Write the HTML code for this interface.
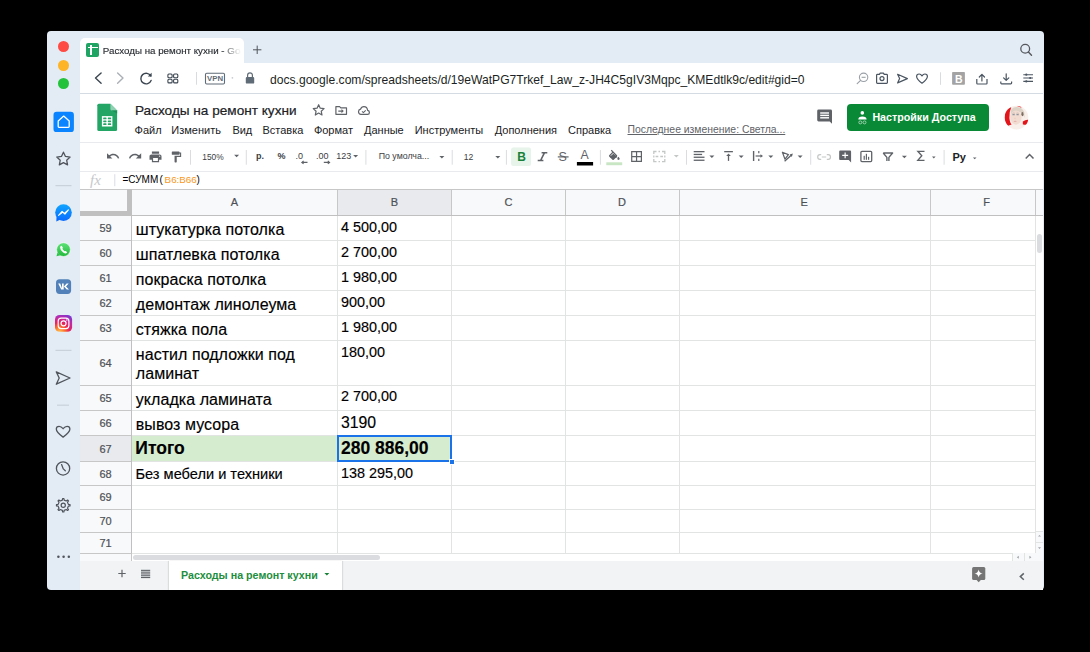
<!DOCTYPE html>
<html><head><meta charset="utf-8">
<style>
*{box-sizing:border-box;margin:0;padding:0}
html,body{width:1090px;height:652px;overflow:hidden;background:#000;font-family:"Liberation Sans",sans-serif}
.a{position:absolute}
.t{position:absolute;white-space:nowrap;line-height:1}
#win{position:absolute;left:46.5px;top:31.3px;width:997px;height:558.5px;background:#e3ebf4;border-radius:4px 4px 4px 4px;overflow:hidden}
.dot{position:absolute;width:11px;height:11px;border-radius:50%}
.hl{position:absolute;height:1px;background:#e2e3e3}
.vl{position:absolute;width:1px;background:#e2e3e3}
.rn{position:absolute;left:80px;width:51px;text-align:center;font-size:11px;color:#4d5156;line-height:1;-webkit-text-stroke:0.2px #4d5156}
.ct{position:absolute;white-space:nowrap;line-height:1;color:#000;font-size:16px}
.nm{position:absolute;white-space:nowrap;line-height:1;color:#000;font-size:14.5px}
.sep{position:absolute;width:1px;height:19px;top:147px;background:#dadce0}
.mn{position:absolute;top:124.6px;font-size:11px;color:#202124;white-space:nowrap;line-height:1}
svg{position:absolute;overflow:visible}
</style></head><body>
<div id="win"></div>

<!-- traffic lights -->
<div class="dot" style="left:58px;top:41px;background:#fe4b44"></div>
<div class="dot" style="left:58px;top:59.7px;background:#fdb426"></div>
<div class="dot" style="left:58px;top:78px;background:#23c23b"></div>

<!-- tab -->
<div class="a" style="left:80px;top:38px;width:164px;height:26px;background:#fff;border-radius:5px 5px 0 0"></div>
<div class="a" style="left:86px;top:43.4px;width:13.4px;height:13.4px;background:#1fa463;border-radius:2px"></div>
<div class="a" style="left:88px;top:46.8px;width:9.6px;height:1.5px;background:#fff"></div>
<div class="a" style="left:90.4px;top:45px;width:1.5px;height:10px;background:#fff"></div>
<div class="t" style="left:102.8px;top:46px;font-size:9.75px;color:#2a2e33;-webkit-text-stroke:0.15px #2a2e33;width:138px;overflow:hidden;-webkit-mask-image:linear-gradient(90deg,#000 85%,transparent)">Расходы на ремонт кухни - Google Таблицы</div>

<!-- address bar -->
<div class="a" style="left:80px;top:63px;width:963px;height:30px;background:#fff"></div>
<div class="a" style="left:80px;top:93px;width:963px;height:1px;background:#d5dbe2"></div>
<div class="t" style="left:270px;top:73.5px;font-size:12.1px;color:#1c1f23">docs.google.com/spreadsheets/d/19eWatPG7Trkef_Law_z-JH4C5gIV3Mqpc_KMEdtlk9c/edit#gid=0</div>

<!-- page -->
<div class="a" style="left:80px;top:94px;width:963px;height:496px;background:#fff"></div>

<!-- sheets header -->
<div class="t" style="left:135px;top:103.8px;font-size:13.6px;color:#202124;-webkit-text-stroke:0.2px #202124">Расходы на ремонт кухни</div>
<div class="mn" style="left:134.6px">Файл</div>
<div class="mn" style="left:171.3px">Изменить</div>
<div class="mn" style="left:232.4px">Вид</div>
<div class="mn" style="left:262.5px">Вставка</div>
<div class="mn" style="left:313.9px">Формат</div>
<div class="mn" style="left:364px">Данные</div>
<div class="mn" style="left:414.7px">Инструменты</div>
<div class="mn" style="left:494.7px">Дополнения</div>
<div class="mn" style="left:568px">Справка</div>
<div class="mn" style="left:627.5px;font-size:10.4px;color:#5f6368;text-decoration:underline;top:125px">Последнее изменение: Светла...</div>

<!-- share button -->
<div class="a" style="left:847px;top:104.4px;width:142px;height:26.6px;background:#098935;border-radius:4px"></div>
<div class="t" style="left:872.4px;top:112px;font-size:10.7px;font-weight:700;color:#fff">Настройки Доступа</div>

<!-- toolbar lines -->
<div class="a" style="left:80px;top:142px;width:963px;height:1px;background:#e8eaed"></div>
<div class="a" style="left:80px;top:171px;width:963px;height:1px;background:#e8eaed"></div>

<!-- formula bar -->
<div class="t" style="left:122.5px;top:175px;font-size:10px;color:#000">=СУММ</div><div class="t" style="left:159.6px;top:175px;font-size:10px;color:#000">(</div><div class="t" style="left:164.6px;top:175px;font-size:9.8px;color:#f7981d;letter-spacing:0px">B6:B66</div><div class="t" style="left:196.4px;top:175px;font-size:10px;color:#000">)</div>

<!-- GRID -->
<div id="grid">
<div class="a" style="left:80px;top:189px;width:963px;height:26px;background:#f8f9fa"></div>
<div class="a" style="left:337px;top:189px;width:114px;height:26px;background:#e8eaed"></div>
<div class="a" style="left:80px;top:215px;width:51px;height:338px;background:#f8f9fa"></div>
<div class="a" style="left:80px;top:435px;width:51px;height:26px;background:#e8eaed"></div>
<div class="a" style="left:132px;top:435px;width:319px;height:26px;background:#d6eccf"></div>
<div class="a" style="left:132px;top:240px;width:903px;height:1px;background:#e2e3e3"></div>
<div class="a" style="left:80px;top:240px;width:51px;height:1px;background:#c7c7c7"></div>
<div class="a" style="left:132px;top:265px;width:903px;height:1px;background:#e2e3e3"></div>
<div class="a" style="left:80px;top:265px;width:51px;height:1px;background:#c7c7c7"></div>
<div class="a" style="left:132px;top:290px;width:903px;height:1px;background:#e2e3e3"></div>
<div class="a" style="left:80px;top:290px;width:51px;height:1px;background:#c7c7c7"></div>
<div class="a" style="left:132px;top:315px;width:903px;height:1px;background:#e2e3e3"></div>
<div class="a" style="left:80px;top:315px;width:51px;height:1px;background:#c7c7c7"></div>
<div class="a" style="left:132px;top:340px;width:903px;height:1px;background:#e2e3e3"></div>
<div class="a" style="left:80px;top:340px;width:51px;height:1px;background:#c7c7c7"></div>
<div class="a" style="left:132px;top:385px;width:903px;height:1px;background:#e2e3e3"></div>
<div class="a" style="left:80px;top:385px;width:51px;height:1px;background:#c7c7c7"></div>
<div class="a" style="left:132px;top:410px;width:903px;height:1px;background:#e2e3e3"></div>
<div class="a" style="left:80px;top:410px;width:51px;height:1px;background:#c7c7c7"></div>
<div class="a" style="left:132px;top:435px;width:903px;height:1px;background:#e2e3e3"></div>
<div class="a" style="left:80px;top:435px;width:51px;height:1px;background:#c7c7c7"></div>
<div class="a" style="left:132px;top:461px;width:903px;height:1px;background:#e2e3e3"></div>
<div class="a" style="left:80px;top:461px;width:51px;height:1px;background:#c7c7c7"></div>
<div class="a" style="left:132px;top:485px;width:903px;height:1px;background:#e2e3e3"></div>
<div class="a" style="left:80px;top:485px;width:51px;height:1px;background:#c7c7c7"></div>
<div class="a" style="left:132px;top:509px;width:903px;height:1px;background:#e2e3e3"></div>
<div class="a" style="left:80px;top:509px;width:51px;height:1px;background:#c7c7c7"></div>
<div class="a" style="left:132px;top:532px;width:903px;height:1px;background:#e2e3e3"></div>
<div class="a" style="left:80px;top:532px;width:51px;height:1px;background:#c7c7c7"></div>
<div class="a" style="left:132px;top:553px;width:903px;height:1px;background:#e2e3e3"></div>
<div class="a" style="left:80px;top:553px;width:51px;height:1px;background:#c7c7c7"></div>
<div class="a" style="left:337px;top:215px;width:1px;height:338px;background:#e2e3e3"></div>
<div class="a" style="left:337px;top:189px;width:1px;height:26px;background:#c7c7c7"></div>
<div class="a" style="left:451px;top:215px;width:1px;height:338px;background:#e2e3e3"></div>
<div class="a" style="left:451px;top:189px;width:1px;height:26px;background:#c7c7c7"></div>
<div class="a" style="left:565px;top:215px;width:1px;height:338px;background:#e2e3e3"></div>
<div class="a" style="left:565px;top:189px;width:1px;height:26px;background:#c7c7c7"></div>
<div class="a" style="left:679px;top:215px;width:1px;height:338px;background:#e2e3e3"></div>
<div class="a" style="left:679px;top:189px;width:1px;height:26px;background:#c7c7c7"></div>
<div class="a" style="left:930px;top:215px;width:1px;height:338px;background:#e2e3e3"></div>
<div class="a" style="left:930px;top:189px;width:1px;height:26px;background:#c7c7c7"></div>
<div class="a" style="left:1035px;top:215px;width:1px;height:338px;background:#e2e3e3"></div>
<div class="a" style="left:1035px;top:189px;width:1px;height:26px;background:#c7c7c7"></div>
<div class="a" style="left:80px;top:189px;width:963px;height:1px;background:#c7c7c7"></div>
<div class="a" style="left:80px;top:214.5px;width:963px;height:1px;background:#c0c0c0"></div>
<div class="a" style="left:131px;top:189px;width:1px;height:364px;background:#c0c0c0"></div>
<div class="a" style="left:127px;top:189px;width:4.5px;height:26px;background:#c0c0c0"></div>
<div class="a" style="left:80px;top:211px;width:51px;height:4px;background:#c0c0c0"></div>
<div class="t" style="left:214.4px;width:40px;text-align:center;top:197.0px;font-size:11px;color:#4d5156;-webkit-text-stroke:0.2px #4d5156">A</div>
<div class="t" style="left:374.3px;width:40px;text-align:center;top:197.0px;font-size:11px;color:#4d5156;-webkit-text-stroke:0.2px #4d5156">B</div>
<div class="t" style="left:488.4px;width:40px;text-align:center;top:197.0px;font-size:11px;color:#4d5156;-webkit-text-stroke:0.2px #4d5156">C</div>
<div class="t" style="left:602.0px;width:40px;text-align:center;top:197.0px;font-size:11px;color:#4d5156;-webkit-text-stroke:0.2px #4d5156">D</div>
<div class="t" style="left:784.2px;width:40px;text-align:center;top:197.0px;font-size:11px;color:#4d5156;-webkit-text-stroke:0.2px #4d5156">E</div>
<div class="t" style="left:966.6px;width:40px;text-align:center;top:197.0px;font-size:11px;color:#4d5156;-webkit-text-stroke:0.2px #4d5156">F</div>
<div class="rn" style="top:223.1px">59</div>
<div class="rn" style="top:248.3px">60</div>
<div class="rn" style="top:273.3px">61</div>
<div class="rn" style="top:298.2px">62</div>
<div class="rn" style="top:323.2px">63</div>
<div class="rn" style="top:358.0px">64</div>
<div class="rn" style="top:392.7px">65</div>
<div class="rn" style="top:417.7px">66</div>
<div class="rn" style="top:443.5px">67</div>
<div class="rn" style="top:468.7px">68</div>
<div class="rn" style="top:492.4px">69</div>
<div class="rn" style="top:515.8px">70</div>
<div class="rn" style="top:537.9px">71</div>
<div class="t" style="left:135.8px;top:222.2px;font-size:16px;font-weight:400;color:#000;-webkit-text-stroke:0.15px #000;letter-spacing:0.05px">штукатурка потолка</div>
<div class="t" style="left:135.8px;top:247.3px;font-size:16px;font-weight:400;color:#000;-webkit-text-stroke:0.15px #000;letter-spacing:0.05px">шпатлевка потолка</div>
<div class="t" style="left:135.8px;top:272.2px;font-size:16px;font-weight:400;color:#000;-webkit-text-stroke:0.15px #000;letter-spacing:0.05px">покраска потолка</div>
<div class="t" style="left:135.8px;top:297.1px;font-size:16px;font-weight:400;color:#000;-webkit-text-stroke:0.15px #000;letter-spacing:0.05px">демонтаж линолеума</div>
<div class="t" style="left:135.8px;top:322.1px;font-size:16px;font-weight:400;color:#000;-webkit-text-stroke:0.15px #000;letter-spacing:0.05px">стяжка пола</div>
<div class="t" style="left:135.8px;top:391.5px;font-size:16px;font-weight:400;color:#000;-webkit-text-stroke:0.15px #000;letter-spacing:0.05px">укладка ламината</div>
<div class="t" style="left:135.8px;top:416.7px;font-size:16px;font-weight:400;color:#000;-webkit-text-stroke:0.15px #000;letter-spacing:0.05px">вывоз мусора</div>
<div class="t" style="left:135.8px;top:347.0px;font-size:16px;font-weight:400;color:#000;-webkit-text-stroke:0.15px #000;letter-spacing:0.05px">настил подложки под</div>
<div class="t" style="left:135.8px;top:366.3px;font-size:16px;font-weight:400;color:#000;-webkit-text-stroke:0.15px #000;letter-spacing:0.05px">ламинат</div>
<div class="t" style="left:135.3px;top:440.0px;font-size:17.5px;font-weight:700;color:#000;-webkit-text-stroke:0.15px #000">Итого</div>
<div class="t" style="left:135.5px;top:466.9px;font-size:14.6px;font-weight:400;color:#000;-webkit-text-stroke:0.15px #000">Без мебели и техники</div>
<div class="t" style="left:341.0px;top:219.6px;font-size:14.4px;font-weight:400;color:#000;-webkit-text-stroke:0.15px #000">4 500,00</div>
<div class="t" style="left:341.0px;top:244.9px;font-size:14.4px;font-weight:400;color:#000;-webkit-text-stroke:0.15px #000">2 700,00</div>
<div class="t" style="left:341.0px;top:270.0px;font-size:14.4px;font-weight:400;color:#000;-webkit-text-stroke:0.15px #000">1 980,00</div>
<div class="t" style="left:341.0px;top:294.9px;font-size:14.4px;font-weight:400;color:#000;-webkit-text-stroke:0.15px #000">900,00</div>
<div class="t" style="left:341.0px;top:319.8px;font-size:14.4px;font-weight:400;color:#000;-webkit-text-stroke:0.15px #000">1 980,00</div>
<div class="t" style="left:341.0px;top:344.8px;font-size:14.4px;font-weight:400;color:#000;-webkit-text-stroke:0.15px #000">180,00</div>
<div class="t" style="left:341.0px;top:389.4px;font-size:14.4px;font-weight:400;color:#000;-webkit-text-stroke:0.15px #000">2 700,00</div>
<div class="t" style="left:341.0px;top:465.9px;font-size:14.4px;font-weight:400;color:#000;-webkit-text-stroke:0.15px #000">138 295,00</div>
<div class="t" style="left:341.0px;top:415.2px;font-size:15.8px;font-weight:400;color:#000;-webkit-text-stroke:0.15px #000">3190</div>
<div class="t" style="left:341.0px;top:439.8px;font-size:17.5px;font-weight:700;color:#000;-webkit-text-stroke:0.15px #000">280 886,00</div>
<div class="a" style="left:337px;top:434.5px;width:115px;height:27px;border:2px solid #1a73e8"></div>
<div class="a" style="left:448.5px;top:458.5px;width:6px;height:6px;background:#1a73e8;border:1px solid #fff"></div>
<div class="a" style="left:1036px;top:215.5px;width:7px;height:337.5px;background:#fff"></div>
<div class="a" style="left:1036.9px;top:233.8px;width:4.8px;height:19px;background:#dadce0;border-radius:3px"></div>
<div class="a" style="left:1036px;top:530.5px;width:7px;height:22.5px;background:#f8f9fa;border-top:1px solid #e2e3e3"></div>
<div class="a" style="left:1036px;top:541.5px;width:7px;height:1px;background:#e2e3e3"></div>
<div class="a" style="left:80px;top:554px;width:963px;height:7px;background:#fff"></div>
<div class="a" style="left:80px;top:554px;width:51px;height:7px;background:#f8f9fa"></div>
<div class="a" style="left:131px;top:553px;width:1px;height:8px;background:#c7c7c7"></div>
<div class="a" style="left:133.2px;top:554.5px;width:247.3px;height:5.2px;background:#dadce0;border-radius:3px"></div>
<div class="a" style="left:1012px;top:553px;width:31px;height:8px;background:#f8f9fa;border-left:1px solid #e2e3e3"></div>
<div class="a" style="left:1024px;top:553px;width:1px;height:8px;background:#e2e3e3"></div>
</div><!--/grid-->

<!-- bottom bar -->
<div class="a" style="left:80px;top:561px;width:963px;height:29px;background:#f1f3f4;border-radius:0 0 4px 0"></div>
<div class="a" style="left:169px;top:561px;width:173px;height:29px;background:#fff;box-shadow:-1px 0 1px rgba(60,64,67,.12),1px 0 1px rgba(60,64,67,.12)"></div>
<div class="t" style="left:181px;top:569.7px;font-size:10.7px;font-weight:700;color:#1e8e3e">Расходы на ремонт кухни</div>
<div class="t" style="left:207px;top:75.2px;font-size:7.8px;font-weight:700;color:#5f6b77">VPN</div>
<!--tb--><div class="t" style="left:202.3px;top:152.5px;font-size:8.4px;color:#3c4043">150%</div>
<div class="t" style="left:256.1px;top:152px;font-size:9px;font-weight:700;color:#3c4043">р.</div>
<div class="t" style="left:277.4px;top:152px;font-size:9px;font-weight:700;color:#3c4043">%</div>
<div class="t" style="left:295.6px;top:151.6px;font-size:9px;color:#3c4043">.0</div>
<div class="t" style="left:315.9px;top:151.6px;font-size:9px;color:#3c4043">.00</div>
<div class="t" style="left:336.2px;top:151.6px;font-size:9px;color:#3c4043">123</div>
<div class="t" style="left:378.7px;top:152.4px;font-size:8.8px;color:#3c4043">По умолча...</div>
<div class="t" style="left:463.8px;top:152.6px;font-size:8.6px;color:#3c4043">12</div>
<div class="t" style="left:558.6px;top:150.7px;font-size:12.5px;color:#5f6368">S</div>
<div class="t" style="left:580.6px;top:148.6px;font-size:12.3px;color:#5f6368">A</div>
<div class="t" style="left:952.4px;top:152.2px;font-size:11px;font-weight:700;color:#202124">Ру</div>
<div class="t" style="left:90px;top:173px;font-size:15px;font-style:italic;font-family:'Liberation Serif',serif;color:#c5c8cc">fx</div>
<!--/tb-->
<!--svg--><svg width="1090" height="652" viewBox="0 0 1090 652" style="left:0;top:0">
<defs>
<linearGradient id="msg" x1="0" y1="0" x2="0" y2="1"><stop offset="0" stop-color="#0fa5ff"/><stop offset="1" stop-color="#0a6cff"/></linearGradient>
<radialGradient id="ig" cx="0.25" cy="1.05" r="1.2"><stop offset="0" stop-color="#fdd05a"/><stop offset="0.25" stop-color="#fd7a2a"/><stop offset="0.5" stop-color="#e8235a"/><stop offset="0.75" stop-color="#c02aa8"/><stop offset="1" stop-color="#6a3ad8"/></radialGradient>
<linearGradient id="wa" x1="0" y1="0" x2="0" y2="1"><stop offset="0" stop-color="#5fe37a"/><stop offset="1" stop-color="#20b83a"/></linearGradient>
</defs>
<!-- opera sidebar -->
<rect x="53.5" y="111.8" width="20.4" height="20.3" rx="3.2" fill="#0a84ff"/>
<path d="M58.2,121 L63.7,116.1 L69.2,121 L69.2,126.6 Q69.2,127.4 68.4,127.4 L59,127.4 Q58.2,127.4 58.2,126.6 Z" fill="none" stroke="#fff" stroke-width="1.3" stroke-linejoin="round"/>
<path d="M63.45,152.20 L65.45,156.45 L70.11,157.04 L66.68,160.25 L67.56,164.86 L63.45,162.60 L59.34,164.86 L60.22,160.25 L56.79,157.04 L61.45,156.45 Z" fill="none" stroke="#50555c" stroke-width="1.3" stroke-linejoin="round"/>
<rect x="55.5" y="185" width="16" height="1.2" fill="#c9d1db"/>
<circle cx="63.5" cy="212.6" r="8.3" fill="url(#msg)"/>
<path d="M56.5,217 L56.3,221.5 L60.5,219.5 Z" fill="#0a6cff"/>
<path d="M58.6,215.4 L62.1,211.3 L64.3,213.3 L68.4,209.8 L64.9,214.1 L62.7,212.1 Z" fill="#fff" stroke="#fff" stroke-width="1.1" stroke-linejoin="round"/>
<circle cx="63.5" cy="249.6" r="6.9" fill="url(#wa)" stroke="#fff" stroke-width="0.6"/>
<path d="M57.5,252.5 L56.5,256.3 L60.5,255.3 Z" fill="#2bc447"/>
<path d="M60.6,246.3 Q61.2,245.5 61.9,246 L62.8,247.6 Q62.9,248.2 62.4,248.6 Q62.8,250.3 64.6,251.3 Q65.1,250.8 65.6,251 L67,251.9 Q67.4,252.5 66.7,253.1 Q65.6,254 63.2,252.6 Q60.2,250.6 60.1,247.6 Q60.1,246.8 60.6,246.3 Z" fill="#fff"/>
<rect x="56" y="279.2" width="15.1" height="14.7" rx="3.6" fill="#5181b8"/>
<path d="M58.2,283.6 L60.2,283.6 L62,288.2 L62,283.6 L63.7,283.6 L63.7,289.6 L61.2,289.6 Z M63.9,286.5 L66.6,283.6 L68.7,283.6 L66,286.5 L69,289.6 L66.8,289.6 Z" fill="#fff"/>
<rect x="55" y="314.9" width="17.1" height="16.9" rx="4.6" fill="url(#ig)"/>
<rect x="58.2" y="318.1" width="10.7" height="10.5" rx="3" fill="none" stroke="#fff" stroke-width="1.2"/>
<circle cx="63.55" cy="323.35" r="2.5" fill="none" stroke="#fff" stroke-width="1.2"/>
<circle cx="66.9" cy="320.1" r="0.75" fill="#fff"/>
<rect x="55.5" y="349.8" width="16" height="1.2" fill="#c9d1db"/>
<path d="M56.3,371.9 L70,378 L56.3,384.2 L59.2,378 Z" fill="none" stroke="#50555c" stroke-width="1.3" stroke-linejoin="round"/>
<rect x="57" y="404.6" width="12" height="1.2" fill="#c9d1db"/>
<path d="M63.1,437.1 C59,434.2 56.3,431.6 56.3,429 C56.3,427.2 57.6,426.3 59.1,426.3 C60.7,426.3 62,427.3 63.1,428.7 C64.2,427.3 65.5,426.3 67.1,426.3 C68.6,426.3 69.9,427.2 69.9,429 C69.9,431.6 67.2,434.2 63.1,437.1 Z" fill="none" stroke="#50555c" stroke-width="1.3" stroke-linejoin="round"/>
<circle cx="63.05" cy="468.45" r="6.65" fill="none" stroke="#50555c" stroke-width="1.3"/>
<path d="M61.6,464.6 L63.3,468.9 L65.3,470.8" fill="none" stroke="#50555c" stroke-width="1.3" stroke-linecap="round" stroke-linejoin="round"/>
<path d="M68.37,504.36 L70.02,504.61 L70.02,505.89 L68.37,506.14 L67.50,508.24 L68.49,509.58 L67.58,510.49 L66.24,509.50 L64.14,510.37 L63.89,512.02 L62.61,512.02 L62.36,510.37 L60.26,509.50 L58.92,510.49 L58.01,509.58 L59.00,508.24 L58.13,506.14 L56.48,505.89 L56.48,504.61 L58.13,504.36 L59.00,502.26 L58.01,500.92 L58.92,500.01 L60.26,501.00 L62.36,500.13 L62.61,498.48 L63.89,498.48 L64.14,500.13 L66.24,501.00 L67.58,500.01 L68.49,500.92 L67.50,502.26 Z" fill="none" stroke="#50555c" stroke-width="1.2" stroke-linejoin="round"/>
<circle cx="63.25" cy="505.25" r="2.1" fill="none" stroke="#50555c" stroke-width="1.2"/>
<circle cx="58.4" cy="556.8" r="1.25" fill="#50555c"/><circle cx="63.6" cy="556.8" r="1.25" fill="#50555c"/><circle cx="68.8" cy="556.8" r="1.25" fill="#50555c"/>

<!-- tab bar -->
<path d="M253,49.8 H261.4 M257.2,45.6 V54" stroke="#50555c" stroke-width="1"/>
<circle cx="1025.2" cy="48.8" r="4.4" fill="none" stroke="#55595e" stroke-width="1.3"/>
<path d="M1028.4,52 L1031.5,55.2" stroke="#55595e" stroke-width="1.4" stroke-linecap="round"/>

<!-- nav -->
<path d="M101.1,72.9 L95.5,78.1 L101.1,83.3" fill="none" stroke="#3b4550" stroke-width="1.4" stroke-linecap="round" stroke-linejoin="round"/>
<path d="M117.6,72.9 L123,78.1 L117.6,83.3" fill="none" stroke="#aab0b6" stroke-width="1.4" stroke-linecap="round" stroke-linejoin="round"/>
<path d="M150.8,76 A5.3,5.3 0 1 0 151.1,80.5" fill="none" stroke="#3b4550" stroke-width="1.4" stroke-linecap="round"/>
<path d="M147.8,76.6 L151.6,76.6 L151.6,72.8 Z" fill="#3b4550"/>
<rect x="167.9" y="74" width="4.2" height="3.7" rx="1" fill="none" stroke="#3b4550" stroke-width="1.1"/>
<rect x="173.6" y="74" width="4.2" height="3.7" rx="1" fill="none" stroke="#3b4550" stroke-width="1.1"/>
<rect x="167.9" y="79.2" width="4.2" height="3.7" rx="1" fill="none" stroke="#3b4550" stroke-width="1.1"/>
<rect x="173.6" y="79.2" width="4.2" height="3.7" rx="1" fill="none" stroke="#3b4550" stroke-width="1.1"/>
<rect x="196" y="72" width="1" height="12.7" fill="#d8dce0"/>
<rect x="205.5" y="73.3" width="19" height="10.7" rx="1.2" fill="none" stroke="#5f6b77" stroke-width="1.1"/>
<circle cx="232.4" cy="77.8" r="0.9" fill="#c8ccd0"/>
<path d="M247.6,77 V75.2 A2.4,2.4 0 0 1 252.4,75.2 V77" fill="none" stroke="#5f6b77" stroke-width="1.2"/>
<rect x="245.8" y="76.9" width="8.4" height="6.7" rx="1.2" fill="#5f6b77"/>

<!-- address right -->
<circle cx="863.6" cy="77.3" r="4.2" fill="none" stroke="#9aa0a6" stroke-width="1.1"/>
<path d="M861.6,77.3 H865.6" stroke="#9aa0a6" stroke-width="1.1"/>
<path d="M860.6,80.4 L857.2,83.6" stroke="#9aa0a6" stroke-width="1.2" stroke-linecap="round"/>
<path d="M876.6,75.2 Q876.6,74.4 877.4,74.4 L879.4,74.4 L880.2,73.1 L883.4,73.1 L884.2,74.4 L886.6,74.4 Q887.4,74.4 887.4,75.2 L887.4,82.6 Q887.4,83.3 886.6,83.3 L877.4,83.3 Q876.6,83.3 876.6,82.6 Z" fill="none" stroke="#4a5561" stroke-width="1.2" stroke-linejoin="round"/>
<circle cx="882" cy="78.6" r="2" fill="none" stroke="#4a5561" stroke-width="1.2"/>
<path d="M897.6,74.3 L907.4,78.6 L897.6,82.9 L899.6,78.6 Z" fill="none" stroke="#4a5561" stroke-width="1.2" stroke-linejoin="round"/>
<path d="M922,83.2 C918.8,80.9 916.6,78.9 916.6,76.5 C916.6,74.9 917.8,74 919.1,74 C920.4,74 921.3,74.8 922,75.9 C922.7,74.8 923.6,74 924.9,74 C926.2,74 927.4,74.9 927.4,76.5 C927.4,78.9 925.2,80.9 922,83.2 Z" fill="none" stroke="#4a5561" stroke-width="1.2" stroke-linejoin="round"/>
<rect x="940" y="72.3" width="1" height="12.5" fill="#d8dce0"/>
<rect x="952.1" y="72" width="12.8" height="12.8" rx="0.8" fill="#a3a3a3"/>
<text x="955" y="82.6" font-family="Liberation Sans" font-size="10.5" font-weight="700" fill="#fff">B</text>
<path d="M976.8,79 V83.3 Q976.8,84 977.5,84 H986.3 Q987,84 987,83.3 V79" fill="none" stroke="#4a5561" stroke-width="1.2" stroke-linejoin="round"/>
<path d="M981.9,81 V74.5 M979.3,77 L981.9,74.3 L984.5,77" fill="none" stroke="#4a5561" stroke-width="1.2" stroke-linecap="round" stroke-linejoin="round"/>
<path d="M1000.8,81.4 V83 Q1000.8,83.8 1001.6,83.8 H1010.8 Q1011.6,83.8 1011.6,83 V81.4" fill="none" stroke="#4a5561" stroke-width="1.2" stroke-linejoin="round"/>
<path d="M1006.2,73.8 V80.2 M1003.6,77.8 L1006.2,80.4 L1008.8,77.8" fill="none" stroke="#4a5561" stroke-width="1.2" stroke-linecap="round" stroke-linejoin="round"/>
<path d="M1023.3,74.7 H1033 M1023.3,78 H1033 M1023.3,81.4 H1033" stroke="#4a5561" stroke-width="1.1"/>
<circle cx="1026.3" cy="74.7" r="1.1" fill="#4a5561"/><circle cx="1030.2" cy="78" r="1.1" fill="#4a5561"/><circle cx="1026.3" cy="81.4" r="1.1" fill="#4a5561"/>

<!-- sheets header -->
<path d="M98.8,103.8 H110.4 L117.1,110.5 V129.4 Q117.1,130.9 115.6,130.9 H98.8 Q97.3,130.9 97.3,129.4 V105.3 Q97.3,103.8 98.8,103.8 Z" fill="#23a566"/>
<path d="M110.4,103.8 L117.1,110.5 H112 Q110.4,110.5 110.4,108.9 Z" fill="#8ed1b1"/>
<path d="M111.6,110.5 L117.1,110.5 L117.1,113.5 Z" fill="#1b9157"/>
<rect x="101.9" y="116.1" width="10.5" height="10.4" fill="#fff"/>
<rect x="103.2" y="117.5" width="3.3" height="1.8" rx="0.6" fill="#23a566"/><rect x="107.8" y="117.5" width="3.3" height="1.8" rx="0.6" fill="#23a566"/>
<rect x="103.2" y="120.4" width="3.3" height="1.8" rx="0.6" fill="#23a566"/><rect x="107.8" y="120.4" width="3.3" height="1.8" rx="0.6" fill="#23a566"/>
<rect x="103.2" y="123.3" width="3.3" height="1.8" rx="0.6" fill="#23a566"/><rect x="107.8" y="123.3" width="3.3" height="1.8" rx="0.6" fill="#23a566"/>
<path d="M318.65,104.70 L320.24,108.22 L324.07,108.64 L321.22,111.23 L322.00,115.01 L318.65,113.10 L315.30,115.01 L316.08,111.23 L313.23,108.64 L317.06,108.22 Z" fill="none" stroke="#5f6368" stroke-width="1.2" stroke-linejoin="round"/>
<path d="M335.9,106.6 H339.6 L340.8,107.8 H346.5 V114.3 H335.9 Z" fill="none" stroke="#5f6368" stroke-width="1.2" stroke-linejoin="round"/>
<path d="M338.3,110.5 H341.5 V109 L343.8,111.1 L341.5,113.2 V111.7 H338.3 Z" fill="#5f6368"/>
<path d="M360.9,114.3 H367.6 Q369.4,114.3 369.4,112.4 Q369.4,110.6 367.6,110.4 Q367.2,106.7 363.9,106.7 Q361.4,106.7 360.5,109.2 Q358.5,109.6 358.5,111.8 Q358.6,114.3 360.9,114.3 Z" fill="none" stroke="#5f6368" stroke-width="1.2" stroke-linejoin="round"/>
<path d="M362,111.3 L363.4,112.6 L365.7,110.3" fill="none" stroke="#5f6368" stroke-width="1.1"/>
<path d="M818.6,109.6 H830.6 Q832,109.6 832,111 V123.7 L829.7,121.5 H818.6 Q817.2,121.5 817.2,120.1 V111 Q817.2,109.6 818.6,109.6 Z" fill="#5f6368"/>
<rect x="820.2" y="112.3" width="8.8" height="1.4" fill="#fff"/><rect x="820.2" y="114.7" width="8.8" height="1.4" fill="#fff"/><rect x="820.2" y="117.1" width="8.8" height="1.4" fill="#fff"/>
<circle cx="862.3" cy="112.9" r="1.8" fill="#fff"/>
<path d="M858.3,119.6 Q858.3,116.6 862.4,116.6 Q866.6,116.6 866.6,119.6 Z" fill="#fff"/>
<circle cx="860.3" cy="122.4" r="1.5" fill="none" stroke="#fff" stroke-opacity="0.6" stroke-width="0.9"/><circle cx="864.5" cy="122.4" r="1.5" fill="none" stroke="#fff" stroke-opacity="0.6" stroke-width="0.9"/>
<clipPath id="av"><circle cx="1016.45" cy="117.7" r="11.9"/></clipPath>
<g clip-path="url(#av)">
<rect x="1004" y="105" width="25" height="25" fill="#f8efea"/>
<path d="M1005,111 Q1008,106.6 1011.2,107.4 Q1009,112 1009.4,118 Q1009.8,122.8 1011.6,124.4 L1008,125.8 Q1004.6,122 1004.5,117 Z" fill="#e4141b"/>
<path d="M1022.8,121.6 Q1026,119.2 1028.6,119.8 L1027.8,124.2 Q1025,125.2 1022.8,124.2 Z" fill="#e4141b"/>
<path d="M1017.5,105.6 Q1020,105.4 1021.8,107.2 L1020.6,107.8 Q1019,106.6 1017.5,106.6 Z" fill="#ec5a5e"/>
<path d="M1010.6,110.4 Q1013,106.8 1017,107 Q1022,107.2 1024.2,112 L1024.6,118 Q1023,112.4 1018,111.6 Q1013,111.2 1011.2,116 Z" fill="#dcd2c6"/>
<ellipse cx="1022.4" cy="114.2" rx="1.1" ry="2.1" fill="#7d6d62"/>
<ellipse cx="1016" cy="117.6" rx="5.6" ry="7.1" fill="#f2dcd2"/>
<ellipse cx="1013.6" cy="114.7" rx="1.4" ry="0.65" fill="#8d929c"/>
<ellipse cx="1017.6" cy="114.7" rx="1.4" ry="0.65" fill="#8d929c"/>
<path d="M1012.4,113.4 Q1013.6,112.8 1014.8,113.3 M1016.4,113.3 Q1017.6,112.8 1018.8,113.4" stroke="#a39a94" stroke-width="0.5" fill="none"/>
<ellipse cx="1015.1" cy="121.3" rx="1.5" ry="0.55" fill="#e2a8a3"/>
<ellipse cx="1015" cy="118.4" rx="0.6" ry="0.9" fill="#ecc9bd"/>
</g>

<!-- toolbar -->
<path transform="translate(105.8,149) scale(.6)" d="M12.5 8c-2.65 0-5.05.99-6.9 2.6L2 7v9h9l-3.62-3.62c1.39-1.16 3.16-1.88 5.12-1.88 3.54 0 6.55 2.31 7.6 5.5l2.37-.78C21.08 11.03 17.15 8 12.5 8z" fill="#5f6368"/>
<path transform="translate(127.98,149) scale(.6)" d="M18.4 10.6C16.55 8.99 14.15 8 11.5 8c-4.65 0-8.58 3.03-9.960 7.22L3.9 16c1.05-3.19 4.05-5.5 7.6-5.5 1.95 0 3.73.72 5.12 1.88L13 16h9V7l-3.6 3.6z" fill="#5f6368"/>
<path transform="translate(148.3,149.6) scale(.6)" d="M19 8H5c-1.66 0-3 1.34-3 3v6h4v4h12v-4h4v-6c0-1.66-1.340-3-3-3zm-3 11H8v-5h8v5zm3-7c-.55 0-1-.45-1-1s.45-1 1-1 1 .45 1 1-.45 1-1 1zm-1-9H6v4h12V3z" fill="#5f6368"/>
<path transform="translate(169.6,150.3) scale(.55)" d="M18 4V3c0-.55-.45-1-1-1H5c-.55 0-1 .45-1 1v4c0 .55.45 1 1 1h12c.55 0 1-.45 1-1V6h1v4H9v11c0 .55.45 1 1 1h2c.55 0 1-.45 1-1v-9h8V4h-3z" fill="#5f6368"/>
<path d="M234.10,154.85 L239.10,154.85 L236.60,157.35 Z" fill="#5f6368"/>
<path d="M353.10,155.05 L358.10,155.05 L355.60,157.55 Z" fill="#5f6368"/>
<path d="M439.40,156.05 L444.40,156.05 L441.90,158.55 Z" fill="#5f6368"/>
<path d="M495.30,156.05 L500.30,156.05 L497.80,158.55 Z" fill="#5f6368"/>
<path d="M673.80,155.05 L678.80,155.05 L676.30,157.55 Z" fill="#c4c7c5"/>
<path d="M709.40,155.45 L714.40,155.45 L711.90,157.95 Z" fill="#5f6368"/>
<path d="M738.70,155.45 L743.70,155.45 L741.20,157.95 Z" fill="#5f6368"/>
<path d="M768.30,155.45 L773.30,155.45 L770.80,157.95 Z" fill="#5f6368"/>
<path d="M797.60,155.45 L802.60,155.45 L800.10,157.95 Z" fill="#5f6368"/>
<path d="M901.90,155.65 L906.90,155.65 L904.40,158.15 Z" fill="#5f6368"/>
<path d="M932.00,156.60 L935.60,156.60 L933.80,158.40 Z" fill="#5f6368"/>
<path d="M972.90,157.40 L976.50,157.40 L974.70,159.20 Z" fill="#5f6368"/>
<path d="M324.40,572.95 L329.40,572.95 L326.90,575.45 Z" fill="#188038"/>
<rect x="190.0" y="150" width="1" height="14.7" fill="#dadce0"/>
<rect x="245.8" y="150" width="1" height="14.7" fill="#dadce0"/>
<rect x="365.4" y="150" width="1" height="14.7" fill="#dadce0"/>
<rect x="451.7" y="150" width="1" height="14.7" fill="#dadce0"/>
<rect x="505.9" y="150" width="1" height="14.7" fill="#dadce0"/>
<rect x="599.9" y="150" width="1" height="14.7" fill="#dadce0"/>
<rect x="686.0" y="150" width="1" height="14.7" fill="#dadce0"/>
<rect x="810.2" y="150" width="1" height="14.7" fill="#dadce0"/>
<rect x="943.6" y="150" width="1" height="14.7" fill="#dadce0"/>
<path d="M301.8,162.4 H307.5 M303.6,160.9 L301.8,162.4 L303.6,163.9" fill="none" stroke="#5f6368" stroke-width="1.1"/>
<path d="M323.8,162.4 H329.6 M327.8,160.9 L329.6,162.4 L327.8,163.9" fill="none" stroke="#5f6368" stroke-width="1.1"/>
<rect x="511.1" y="147.4" width="19.9" height="18.5" rx="2" fill="#e6f4ea"/>
<text x="517.2" y="161.1" font-family="Liberation Sans" font-size="12" font-weight="700" fill="#188038">B</text>
<path d="M541.6,152.8 H547.3 M537.7,160.5 H543.4 M544.4,152.8 L540.6,160.5" fill="none" stroke="#5f6368" stroke-width="1.6"/>
<path d="M557.8,156.9 H568.6" stroke="#5f6368" stroke-width="1.2"/>
<rect x="576.9" y="162" width="16.2" height="3.5" fill="#000"/>
<path transform="translate(607.1,149.8) scale(.6)" d="M16.56 8.94L7.62 0 6.21 1.41l2.38 2.38-5.15 5.15c-.59.59-.59 1.54 0 2.12l5.5 5.5c.29.29.68.44 1.06.44s.77-.15 1.06-.44l5.5-5.5c.59-.58.59-1.53 0-2.12zM5.21 10L10 5.210 14.79 10H5.21zM19 11.5s-2 2.17-2 3.5c0 1.1.9 2 2 2s2-.9 2-2c0-1.33-2-3.5-2-3.5z" fill="#5f6368"/>
<path d="M611.2,155.8 L613.5,153.5 L617.6,157.6 H609.8 Z" fill="#5f6368"/>
<rect x="606.3" y="162.3" width="15.9" height="2.9" fill="#c9e6c4"/>
<path transform="translate(629.3,149.3) scale(.605)" d="M3 3v18h18V3H3zm8 16H5v-6h6v6zm0-8H5V5h6v6zm8 8h-6v-6h6v6zm0-8h-6V5h6v6z" fill="#5f6368"/>
<path d="M653.8,154 V151.5 H656.5 M662,151.5 H664.8 V154 M664.8,159 V161.7 H662 M656.5,161.7 H653.8 V159 M653.8,155.6 V157.4 M664.8,155.6 V157.4 M658.5,151.5 H660 M658.5,161.7 H660 M655.6,156.5 H658.3 M660.3,156.5 H663" fill="none" stroke="#c4c7c5" stroke-width="1.3"/>
<rect x="693.7" y="151" width="10.8" height="1.3" fill="#5f6368"/><rect x="693.7" y="153.8" width="8.4" height="1.3" fill="#5f6368"/><rect x="693.7" y="156.6" width="10.8" height="1.3" fill="#5f6368"/><rect x="693.7" y="159.6" width="10.8" height="1.3" fill="#5f6368"/>
<rect x="724.2" y="151" width="8.7" height="1.3" fill="#5f6368"/>
<path d="M728.5,160.9 V155" stroke="#5f6368" stroke-width="1.3"/><path d="M726.2,156 L728.5,153.5 L730.8,156 Z" fill="#5f6368"/>
<path d="M753.6,151 V161" stroke="#5f6368" stroke-width="1.4"/>
<path d="M758.8,151 V153.3 M758.8,158.7 V161" stroke="#5f6368" stroke-width="1.2"/>
<path d="M755.6,156 H761" stroke="#5f6368" stroke-width="1.2"/><path d="M760.5,154.2 L763,156 L760.5,157.8 Z" fill="#5f6368"/>
<path d="M782.4,152.2 L788.4,154.6 L785,159.2 Z" fill="none" stroke="#5f6368" stroke-width="1.2" stroke-linejoin="round"/>
<path d="M784.6,161.3 L791.2,155.3" stroke="#5f6368" stroke-width="1.3"/><path d="M789.6,154.6 L792.8,153.6 L791.9,156.9 Z" fill="#5f6368"/>
<path d="M821.2,154.7 H820 A2.3,2.3 0 0 0 820,159.3 H821.2 M826.8,154.7 H828.2 A2.3,2.3 0 0 1 828.2,159.3 H826.8 M821.8,157 H826.2" fill="none" stroke="#c4c7c5" stroke-width="1.2"/>
<path transform="translate(838,149.4) scale(.595)" d="M22 4c0-1.1-.9-2-2-2H4c-1.1 0-1.99.9-1.99 2L2 16c0 1.1.9 2 2 2h14l4 4V4zm-5 7h-4v4h-2v-4H7V9h4V5h2v4h4v2z" fill="#5f6368"/>
<rect x="860.9" y="151.3" width="10.8" height="10.3" rx="1" fill="none" stroke="#5f6368" stroke-width="1.3"/>
<rect x="863.6" y="155.8" width="1.2" height="4" fill="#5f6368"/><rect x="865.8" y="153.8" width="1.2" height="6" fill="#5f6368"/><rect x="868" y="156.8" width="1.2" height="3" fill="#5f6368"/>
<path d="M883.2,153 H892.6 L888.9,157.4 V161 M886.9,161 V157.4 L883.2,153" fill="none" stroke="#5f6368" stroke-width="1.4" stroke-linejoin="round"/>
<path d="M924.5,151.3 H917.8 L921.8,155.8 L917.8,160.3 H924.5" fill="none" stroke="#5f6368" stroke-width="1.3"/>
<path d="M1025.7,158.6 L1029.6,154.6 L1033.5,158.6" fill="none" stroke="#5f6368" stroke-width="1.5"/>

<!-- formula bar -->
<rect x="114.3" y="174.2" width="1" height="12" fill="#dadce0"/>

<!-- bottom -->
<path d="M118.3,573.5 H125.7 M122,569.8 V577.2" stroke="#5f6368" stroke-width="1.2"/>
<rect x="141" y="569.8" width="9.2" height="1.1" fill="#5f6368"/><rect x="141" y="571.6" width="9.2" height="1.1" fill="#5f6368"/><rect x="141" y="573.4" width="9.2" height="1.1" fill="#5f6368"/><rect x="141" y="575.2" width="9.2" height="1.1" fill="#5f6368"/><rect x="141" y="577" width="9.2" height="1.1" fill="#5f6368"/>
<rect x="972.1" y="567" width="13.2" height="13" rx="1.5" fill="#757575"/>
<path d="M976.6,579.9 L978.7,582.3 L980.8,579.9 Z" fill="#757575"/>
<path d="M978.6,569.4 Q979.1,573 982.7,573.5 Q979.1,574 978.6,577.6 Q978.1,574 974.5,573.5 Q978.1,573 978.6,569.4 Z" fill="#fff"/>
<path d="M1023.8,573.4 L1020.3,576.6 L1023.8,579.8" fill="none" stroke="#5f6368" stroke-width="1.5"/>
<path d="M1018.8,555.8 L1016.8,557.3 L1018.8,558.8 Z M1029.4,555.8 L1031.4,557.3 L1029.4,558.8 Z" fill="#a0a4a8"/>
<path d="M1038,536.6 L1039.5,534.9 L1041,536.6 Z M1038,547.3 L1039.5,549 L1041,547.3 Z" fill="#a0a4a8"/>
</svg>
<!--/svg-->
</body></html>
